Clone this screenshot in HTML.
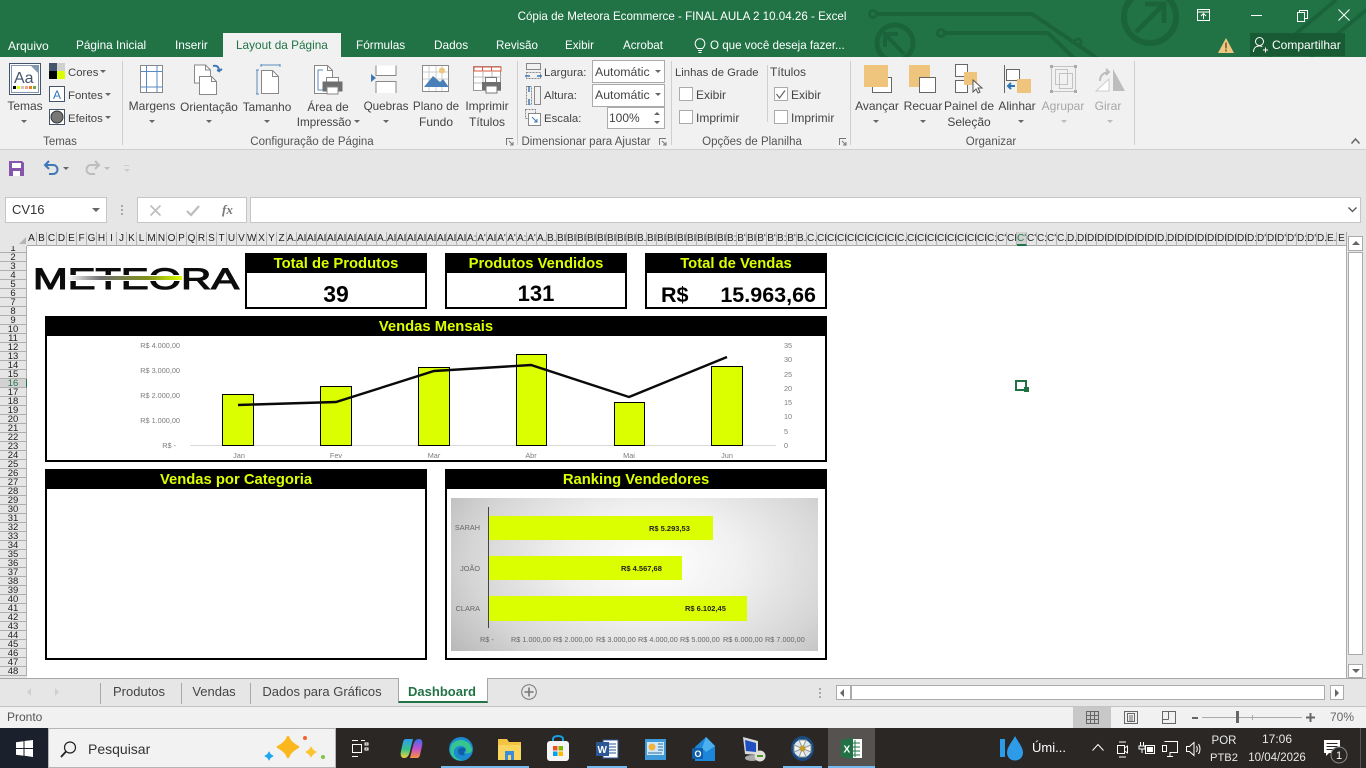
<!DOCTYPE html>
<html lang="pt-BR"><head><meta charset="utf-8"><title>Excel</title>
<style>
html,body{margin:0;padding:0;width:1366px;height:768px;overflow:hidden;background:#e6e6e6;font-family:"Liberation Sans",sans-serif;font-size:12px;color:#444}
.a{position:absolute}
.t{position:absolute;white-space:nowrap;line-height:16px;height:16px}
.c{transform:translateX(-50%)}
.w{color:#fff}
.g{color:#a6a6a6}
.gl{color:#555;font-size:11.5px}
.sm{font-size:11.4px}
svg{position:absolute;overflow:visible}
.sep{position:absolute;width:1px;background:#cfcfcf}
.car{position:absolute;width:0;height:0;border-left:3px solid transparent;border-right:3px solid transparent;border-top:3px solid #666}
.cb{position:absolute;width:12px;height:12px;background:#fff;border:1px solid #ababab}
#cols{position:absolute;left:27px;top:232px;width:1320px;height:14px;display:flex;overflow:hidden}
#cols b{font-weight:normal;flex:0 0 9px;width:9px;border-right:1px solid #b5b5b5;border-bottom:1px solid #a8a8a8;height:13px;line-height:14px;font-size:10px;color:#222;text-align:center;overflow:hidden;white-space:nowrap;background:#e6e6e6}
#cols b.s{background:#d2d2d2;color:#217346;border-bottom:2px solid #217346;height:12px}
#rows{position:absolute;left:0;top:246px;width:27px;height:431px;overflow:hidden;background:#e6e6e6}
#rows b{position:absolute;left:0;width:26px;height:8px;border-bottom:1px solid #aeaeae;border-right:1px solid #aeaeae;font-weight:normal;font-size:9.5px;line-height:9px;text-align:center;color:#222;overflow:hidden}
.box{position:absolute;box-sizing:border-box;border:2px solid #000;background:#fff}
.hd{position:absolute;left:0;right:0;top:0;height:18px;background:#000;color:#dcff00;font-weight:bold;font-size:14.800px;line-height:18px;text-align:center;white-space:nowrap}
.val{position:absolute;color:#000;font-weight:bold;white-space:nowrap;line-height:26px}
.ax{position:absolute;font-size:7.300px;line-height:8px;color:#7c7c7c;white-space:nowrap}
.bar{position:absolute;left:489px;background:#dcff00}
.bl{position:absolute;font-size:7.500px;font-weight:bold;line-height:8px;color:#222;white-space:nowrap}
.sb{position:absolute;box-sizing:border-box;background:#fff;border:1px solid #ababab}
</style></head><body>

<!-- title bar -->
<div class="a" style="left:0;top:0;width:1366px;height:57px;background:#217346;overflow:hidden">
<svg style="left:0;top:0" width="1366" height="57" fill="none" stroke="#1b643b" stroke-width="4">
<circle cx="1150" cy="17" r="26" stroke-width="6"/>
<path d="M1136 32L1163 5M1145 4h19v19" stroke-width="5"/>
<circle cx="895" cy="43" r="18" stroke-width="5"/>
<path d="M887 36L904 54M885 47V34h13" stroke-width="4"/>
<circle cx="873" cy="14" r="3.500" stroke-width="3"/>
<path d="M877 14H1032L1100 60"/>
<circle cx="941" cy="33" r="3.500" stroke-width="3"/>
<path d="M945 33H1048L1076 60"/>
<circle cx="1078" cy="42" r="3" stroke-width="3"/>
<path d="M1268 57L1336 0M1310 57L1366 10" stroke-width="4"/>
</svg>
</div>
<div class="t w" style="left:682px;top:9px;font-size:11.600px;transform:translateX(-50%)">Cópia de Meteora Ecommerce - FINAL AULA 2 10.04.26 - Excel</div>
<svg style="left:1197px;top:9px" width="14" height="13" fill="none" stroke="#fff"><path d="M.5 .5h12v11h-12zM.5 3h12M6.500 10V5M4 7l2.500-2.500L9 7"/></svg>
<div class="a" style="left:1251px;top:15px;width:11px;height:1px;background:#fff"></div>
<svg style="left:1297px;top:10px" width="12" height="12" fill="none" stroke="#fff"><path d="M.5 2.500h7v9h-7zM2.500 2.500V.5h8v8h-3"/></svg>
<svg style="left:1338px;top:9px" width="12" height="12" fill="none" stroke="#fff"><path d="M.5 .5l11 11M11.500 .5l-11 11"/></svg>

<!-- tabs -->
<div class="t w" style="left:8px;top:38px">Arquivo</div>
<div class="t w" style="left:76px;top:37px;font-size:11.800px">Página Inicial</div>
<div class="t w" style="left:175px;top:37px;font-size:11.800px">Inserir</div>
<div class="a" style="left:223px;top:33px;width:118px;height:24px;background:#f1f1f1"></div>
<div class="t" style="left:236px;top:37px;color:#217346;font-size:11.800px">Layout da Página</div>
<div class="t w" style="left:356px;top:37px;font-size:11.800px">Fórmulas</div>
<div class="t w" style="left:434px;top:37px;font-size:11.800px">Dados</div>
<div class="t w" style="left:496px;top:38px;font-size:11.600px">Revisão</div>
<div class="t w" style="left:565px;top:38px;font-size:11.600px">Exibir</div>
<div class="t w" style="left:623px;top:38px;font-size:11.600px">Acrobat</div>
<svg style="left:694px;top:38px" width="12" height="15" fill="none" stroke="#fff"><path d="M3.500 10.500C1 8 .8 5.500 1.600 3.600 3.500-.2 8.500-.2 10.400 3.600c.8 1.900.6 4.400-1.900 6.900zM4 12.500h4M4.500 14.500h3"/></svg>
<div class="t w" style="left:710px;top:38px;font-size:11.600px">O que você deseja fazer...</div>
<svg style="left:1218px;top:38px" width="16" height="15"><path d="M8 0L16 15H0z" fill="#f0c780"/><path d="M8 4.500v6M8 11.500v2" stroke="#7a5a30" stroke-width="1.600"/></svg>
<div class="a" style="left:1250px;top:33px;width:95px;height:23px;background:#185a34"></div>
<svg style="left:1253px;top:37px" width="15" height="16" fill="none" stroke="#fff"><circle cx="6.500" cy="4.500" r="4"/><path d="M.5 15c0-4 2.500-6 6-6 1 0 2 .2 2.800.6M10 13h5M12.500 10.500v5"/></svg>
<div class="t w" style="left:1272px;top:37px">Compartilhar</div>

<!-- ribbon -->
<div class="a" style="left:0;top:57px;width:1366px;height:92px;background:#f1f1f1;border-bottom:1px solid #d0d0d0"></div>
<div class="sep" style="left:122px;top:61px;height:84px"></div>
<div class="sep" style="left:517px;top:61px;height:84px"></div>
<div class="sep" style="left:671px;top:61px;height:84px"></div>
<div class="sep" style="left:850px;top:61px;height:84px"></div>
<div class="sep" style="left:1134px;top:61px;height:84px"></div>
<div class="sep" style="left:767px;top:65px;height:57px"></div>

<!-- temas -->
<svg style="left:9px;top:63px" width="32" height="32"><rect x=".5" y=".5" width="31" height="31" fill="#fff" stroke="#44546a"/><rect x="2.500" y="2.500" width="27" height="27" fill="#fff" stroke="#8497b0"/><path d="M22 3h7v7z" fill="#8497b0"/><rect x="4" y="23" width="3" height="3" fill="#000"/><rect x="8" y="23" width="3" height="3" fill="#dcff00"/><rect x="12" y="23" width="3" height="3" fill="#c9c9c9"/><rect x="16" y="23" width="3" height="3" fill="#f4a582"/><rect x="20" y="23" width="3" height="3" fill="#ed7d31"/><rect x="24" y="23" width="3" height="3" fill="#70ad47"/><text x="5" y="20" font-size="16" fill="#44546a" font-family="Liberation Sans">Aa</text></svg>
<div class="t c" style="left:25px;top:98px">Temas</div><div class="car" style="left:21px;top:120px"></div>
<svg style="left:49px;top:63px" width="16" height="16"><rect width="8" height="8" fill="#44546a"/><rect x="8" width="8" height="8" fill="#d0d0d0"/><rect y="8" width="8" height="8" fill="#000"/><rect x="8" y="8" width="8" height="8" fill="#dcff00"/></svg>
<div class="t sm" style="left:68px;top:65px">Cores</div><div class="car" style="left:100px;top:70px"></div>
<svg style="left:49px;top:86px" width="16" height="16"><rect x=".5" y=".5" width="15" height="15" fill="#fff" stroke="#44546a"/><text x="4" y="13" font-size="12" fill="#2e75b6" font-family="Liberation Sans">A</text></svg>
<div class="t sm" style="left:68px;top:88px">Fontes</div><div class="car" style="left:105px;top:93px"></div>
<svg style="left:49px;top:109px" width="16" height="16"><rect x=".5" y=".5" width="15" height="15" fill="#fff" stroke="#44546a"/><circle cx="8" cy="8" r="6" fill="#777" stroke="#333"/></svg>
<div class="t sm" style="left:68px;top:111px">Efeitos</div><div class="car" style="left:105px;top:116px"></div>
<div class="t c gl" style="left:60px;top:134px">Temas</div>

<!-- config -->
<svg style="left:140px;top:65px" width="24" height="28" fill="#fff" stroke="#888"><rect x=".5" y=".5" width="22" height="27"/><path d="M.5 6.500h22M.5 22h22M6.500 .5v27M17 .5v27" stroke="#5b8ac0" fill="none"/></svg>
<div class="t c" style="left:152px;top:98px">Margens</div><div class="car" style="left:149px;top:120px"></div>
<svg style="left:194px;top:64px" width="30" height="31" fill="#fff" stroke="#888"><path d="M.5 1h11l5 5v13H.5z"/><path d="M5.500 12.500h12l5 5v13H5.500z"/><path d="M11.500 1v5h5M17.500 12.500v5h5" fill="none"/><path d="M19 2c4-1 6 1 6 5l-2-1m2 1l3-2" fill="none" stroke="#3f78b6" stroke-width="2"/></svg>
<div class="t c" style="left:209px;top:99px;font-size:11.800px">Orientação</div><div class="car" style="left:206px;top:120px"></div>
<svg style="left:256px;top:64px" width="24" height="30" fill="#fff" stroke="#888"><path d="M5 1h19M5 0v3M24 0v3M1 6v24M0 6h3M0 30h3" stroke="#5b8ac0" fill="none"/><path d="M5.500 6.500h11l6 6v17h-17z"/><path d="M16.500 6.500v6h6" fill="none"/></svg>
<div class="t c" style="left:267px;top:99px;font-size:11.800px">Tamanho</div><div class="car" style="left:264px;top:120px"></div>
<svg style="left:314px;top:65px" width="30" height="30" fill="#fff" stroke="#888"><path d="M.5 .5h13l5 5v23H.5z"/><path d="M13.500 .5v5h5" fill="none"/><path d="M9 5H4v20h5" fill="none" stroke="#5b8ac0"/><rect x="12.500" y="12.500" width="12" height="5"/><rect x="9" y="17" width="19" height="9" fill="#6f6f6f" stroke="#6f6f6f"/><rect x="13" y="22" width="11" height="7"/></svg>
<div class="t c" style="left:328px;top:99px;font-size:11.800px">Área de</div><div class="t c" style="left:324px;top:115px;font-size:11.700px">Impressão</div><div class="car" style="left:354px;top:120px"></div>
<svg style="left:371px;top:65px" width="26" height="28" fill="#fff" stroke="#888"><path d="M5 .5v10h20V.5M5 28V16.500h20V28"/><path d="M0 9l5 4-5 4z" fill="#3f78b6" stroke="none"/></svg>
<div class="t c" style="left:386px;top:99px;font-size:11.700px">Quebras</div><div class="car" style="left:383px;top:120px"></div>
<svg style="left:422px;top:65px" width="27" height="27"><rect x=".5" y=".5" width="26" height="26" fill="#fff" stroke="#8a8a8a"/><path d="M1 7h25M1 14h25M7 1v25M14 1v25M20 1v25" stroke="#cfcfcf" fill="none"/><circle cx="20" cy="5.500" r="3" fill="#efc57e"/><path d="M2 22l9-11 7 6 3-3 5 7v1H2z" fill="#4a80b8"/></svg>
<div class="t c" style="left:436px;top:99px;font-size:11.700px">Plano de</div><div class="t c" style="left:436px;top:114px">Fundo</div>
<svg style="left:473px;top:66px" width="30" height="28"><rect x=".5" y=".5" width="27" height="24" fill="#fff" stroke="#999"/><path d="M1 1h27v4H1z" fill="#fff" stroke="#d9583a"/><path d="M9.500 1v4M18.500 1v4" stroke="#d9583a"/><path d="M1 11h27M1 17h27M10 5v20M19 5v20" stroke="#bbb"/><rect x="12.500" y="11.500" width="11" height="5" fill="#fff" stroke="#777"/><rect x="9" y="16" width="19" height="8" fill="#6f6f6f"/><rect x="13" y="20" width="11" height="7" fill="#fff" stroke="#777"/></svg>
<div class="t c" style="left:487px;top:98px">Imprimir</div><div class="t c" style="left:487px;top:114px">Títulos</div>
<div class="t c gl" style="left:312px;top:134px">Configuração de Página</div>
<svg style="left:506px;top:138px" width="8" height="8" fill="none" stroke="#777"><path d="M.5 7V.5H7M3 3l4 4M7 4v3H4"/></svg>

<!-- dimensionar -->
<svg style="left:525px;top:63px" width="17" height="18" fill="none" stroke="#888"><rect x="1.500" y=".5" width="14" height="6"/><path d="M1.500 9.500h14v6h-14z" stroke-dasharray="2 1"/><path d="M0 13h5M12 13h5" stroke="#3f78b6" stroke-width="1.500"/></svg>
<div class="t sm" style="left:544px;top:65px">Largura:</div>
<div class="sb" style="left:592px;top:60px;width:73px;height:23px"></div><div class="t" style="left:595px;top:64px;font-size:12.300px">Automátic</div><div class="car" style="left:655px;top:70px"></div>
<svg style="left:525px;top:86px" width="17" height="20" fill="none" stroke="#888"><rect x="9.500" y=".5" width="6" height="18"/><path d="M1.500 .5h5v18h-5z" stroke-dasharray="2 1"/><path d="M4 0v6M4 13v6" stroke="#3f78b6" stroke-width="1.500"/></svg>
<div class="t sm" style="left:544px;top:88px">Altura:</div>
<div class="sb" style="left:592px;top:84px;width:73px;height:23px"></div><div class="t" style="left:595px;top:87px;font-size:12.300px">Automátic</div><div class="car" style="left:655px;top:93px"></div>
<svg style="left:525px;top:109px" width="16" height="17" fill="none" stroke="#888"><path d="M.5 .5h10v9h-10z" stroke-dasharray="2 1"/><path d="M3.500 4.500h12v12h-12z" fill="#fff"/><path d="M7 8l5 5M9 13h3v-3" stroke="#3f78b6"/></svg>
<div class="t sm" style="left:544px;top:111px">Escala:</div>
<div class="sb" style="left:607px;top:107px;width:58px;height:22px"></div><div class="t" style="left:609px;top:110px">100%</div>
<div class="car" style="left:654px;top:112px;border-top:0;border-bottom:3px solid #666"></div><div class="car" style="left:654px;top:121px"></div>
<div class="t c gl" style="left:586px;top:134px">Dimensionar para Ajustar</div>
<svg style="left:659px;top:138px" width="8" height="8" fill="none" stroke="#777"><path d="M.5 7V.5H7M3 3l4 4M7 4v3H4"/></svg>

<!-- opcoes -->
<div class="t" style="left:675px;top:65px;font-size:11.300px">Linhas de Grade</div>
<div class="cb" style="left:679px;top:87px"></div><div class="t" style="left:696px;top:87px">Exibir</div>
<div class="cb" style="left:679px;top:110px"></div><div class="t" style="left:696px;top:110px">Imprimir</div>
<div class="t" style="left:770px;top:64px">Títulos</div>
<div class="cb" style="left:774px;top:87px"></div><svg style="left:776px;top:90px" width="10" height="9" fill="none" stroke="#666" stroke-width="1.200"><path d="M.5 4l3 4L9 .5"/></svg><div class="t" style="left:791px;top:87px">Exibir</div>
<div class="cb" style="left:774px;top:110px"></div><div class="t" style="left:791px;top:110px">Imprimir</div>
<div class="t c gl" style="left:752px;top:134px">Opções de Planilha</div>
<svg style="left:839px;top:138px" width="8" height="8" fill="none" stroke="#777"><path d="M.5 7V.5H7M3 3l4 4M7 4v3H4"/></svg>

<!-- organizar -->
<svg style="left:864px;top:65px" width="30" height="28"><rect x="8.500" y="12.500" width="19" height="15" fill="#fff" stroke="#666"/><rect x="0" y="0" width="24" height="22" fill="#efc57e"/></svg>
<div class="t c" style="left:877px;top:98px">Avançar</div><div class="car" style="left:873px;top:120px"></div>
<svg style="left:909px;top:65px" width="28" height="28"><rect width="21" height="22" fill="#efc57e"/><rect x="10.500" y="12.500" width="16" height="15" fill="#fff" stroke="#666"/></svg>
<div class="t c" style="left:923px;top:98px">Recuar</div><div class="car" style="left:920px;top:120px"></div>
<svg style="left:955px;top:64px" width="30" height="30"><rect x=".5" y=".5" width="12" height="12" fill="#fff" stroke="#666"/><rect x=".5" y="16.500" width="12" height="12" fill="#fff" stroke="#666"/><rect x="9" y="8" width="13" height="13" fill="#efc57e"/><path d="M18 16v12l3-3 2 4 2-1-2-4h4z" fill="#fff" stroke="#555"/></svg>
<div class="t c" style="left:969px;top:98px">Painel de</div><div class="t c" style="left:969px;top:114px">Seleção</div>
<svg style="left:1004px;top:65px" width="28" height="28"><path d="M.5 0v28" stroke="#666"/><rect x="2.500" y="4.500" width="13" height="11" fill="#fff" stroke="#666"/><rect x="13" y="14" width="14" height="14" fill="#efc57e"/><path d="M11 21H4m3-3l-3 3 3 3" fill="none" stroke="#2e75b6" stroke-width="2"/></svg>
<div class="t c" style="left:1017px;top:98px">Alinhar</div><div class="car" style="left:1018px;top:120px"></div>
<svg style="left:1050px;top:65px" width="27" height="28" fill="none" stroke="#c2c2c2"><rect x="5.500" y="4.500" width="12" height="15"/><rect x="9.500" y="8.500" width="13" height="15"/><rect x="1.500" y="1.500" width="24" height="25"/><path d="M0 0h3v3H0zM24 0h3v3h-3zM0 25h3v3H0zM24 25h3v3h-3z" fill="#aaa" stroke="none"/></svg>
<div class="t c g" style="left:1063px;top:98px">Agrupar</div><div class="car" style="left:1061px;top:120px;border-top-color:#bbb"></div>
<svg style="left:1095px;top:67px" width="30" height="26"><path d="M18 2v22h12z" fill="#bdbdbd"/><path d="M14 12L1 24h13z" fill="#fff" stroke="#ccc"/><path d="M5 14c0-5 3-8 8-9m-2-3l3 3-3 3" fill="none" stroke="#bdbdbd" stroke-width="2"/></svg>
<div class="t c g" style="left:1108px;top:98px">Girar</div><div class="car" style="left:1107px;top:120px;border-top-color:#bbb"></div>
<div class="t c gl" style="left:991px;top:134px">Organizar</div>
<svg style="left:1351px;top:138px" width="9" height="6" fill="none" stroke="#666" stroke-width="1.500"><path d="M.5 5.500L4.500 1l4 4.500"/></svg>

<!-- QAT -->
<svg style="left:9px;top:161px" width="15" height="15"><path d="M0 0h13l2 2v13H0z" fill="#8655ad"/><rect x="3" y="2" width="9" height="5" fill="#fff"/><rect x="4" y="10" width="7" height="5" fill="#fff"/></svg>
<svg style="left:44px;top:160px" width="15" height="15" fill="none" stroke="#3f78b6" stroke-width="2"><path d="M5 1L1 5l4 4M1 5h8c6 0 6 9 0 9H5"/></svg>
<div class="car" style="left:63px;top:167px"></div>
<svg style="left:85px;top:160px" width="15" height="15" fill="none" stroke="#bdbdbd" stroke-width="2"><path d="M10 1l4 4-4 4M14 5H6c-6 0-6 9 0 9h4"/></svg>
<div class="car" style="left:104px;top:167px;border-top-color:#bbb"></div>
<div class="a" style="left:124px;top:165px;width:5px;height:1px;background:#ccc"></div><div class="car" style="left:124px;top:169px;border-top-color:#ccc"></div>

<!-- formula bar -->
<div class="sb" style="left:5px;top:197px;width:102px;height:26px;border-color:#c6c6c6"></div>
<div class="t" style="left:12px;top:202px;font-size:13px;color:#333">CV16</div>
<div class="car" style="left:92px;top:208px;border-left-width:4px;border-right-width:4px;border-top-width:4px"></div>
<div class="a" style="left:121px;top:205px;width:2px;height:2px;background:#aaa;box-shadow:0 4px #aaa,0 8px #aaa"></div>
<div class="sb" style="left:137px;top:197px;width:110px;height:26px;border-color:#c6c6c6"></div>
<svg style="left:150px;top:205px" width="12" height="11" fill="none" stroke="#bdbdbd" stroke-width="1.600"><path d="M.5 .5l10 10M10.500 .5l-10 10"/></svg>
<svg style="left:186px;top:205px" width="14" height="11" fill="none" stroke="#bdbdbd" stroke-width="2.200"><path d="M1 6l4 4 8-9"/></svg>
<div class="t" style="left:222px;top:202px;font-family:'Liberation Serif',serif;font-style:italic;font-weight:bold;font-size:13px;color:#777">fx</div>
<div class="sb" style="left:250px;top:197px;width:1111px;height:26px;border-color:#c6c6c6"></div>
<svg style="left:1348px;top:207px" width="9" height="6" fill="none" stroke="#555" stroke-width="1.300"><path d="M.5 .5l4 4 4-4"/></svg>

<!-- sheet -->
<div class="a" style="left:27px;top:246px;width:1319px;height:432px;background:#fff"></div>
<svg style="left:19px;top:237px" width="7" height="7"><path d="M7 0v7H0z" fill="#b5b5b5"/></svg>
<div id="cols"><b>A</b><b>B</b><b>C</b><b>D</b><b>E</b><b>F</b><b>G</b><b>H</b><b>I</b><b>J</b><b>K</b><b>L</b><b>M</b><b>N</b><b>O</b><b>P</b><b>Q</b><b>R</b><b>S</b><b>T</b><b>U</b><b>V</b><b>W</b><b>X</b><b>Y</b><b>Z</b>
<b>A.</b><b>AI</b><b>AI</b><b>AI</b><b>AI</b><b>AI</b><b>AI</b><b>AI</b><b>AI</b><b>A.</b><b>AI</b><b>AI</b><b>AI</b><b>AI</b><b>AI</b><b>AI</b><b>AI</b><b>AI</b><b>A:</b><b>A'</b><b>AI</b><b>A'</b><b>A'</b><b>A:</b><b>A'</b><b>A.</b>
<b>B.</b><b>BI</b><b>BI</b><b>BI</b><b>BI</b><b>BI</b><b>BI</b><b>BI</b><b>BI</b><b>B.</b><b>BI</b><b>BI</b><b>BI</b><b>BI</b><b>BI</b><b>BI</b><b>BI</b><b>BI</b><b>B:</b><b>B'</b><b>BI</b><b>B'</b><b>B'</b><b>B:</b><b>B'</b><b>B.</b>
<b>C.</b><b>CI</b><b>CI</b><b>CI</b><b>CI</b><b>CI</b><b>CI</b><b>CI</b><b>CI</b><b>C.</b><b>CI</b><b>CI</b><b>CI</b><b>CI</b><b>CI</b><b>CI</b><b>CI</b><b>CI</b><b>C:</b><b>C'</b><b>CI</b><b class="s">C'</b><b>C'</b><b>C:</b><b>C'</b><b>C.</b>
<b>D.</b><b>DI</b><b>DI</b><b>DI</b><b>DI</b><b>DI</b><b>DI</b><b>DI</b><b>DI</b><b>D.</b><b>DI</b><b>DI</b><b>DI</b><b>DI</b><b>DI</b><b>DI</b><b>DI</b><b>DI</b><b>D:</b><b>D'</b><b>DI</b><b>D'</b><b>D'</b><b>D:</b><b>D'</b><b>D.</b>
<b>E.</b><b>E</b></div>
<div id="rows">
<b style="top:-2px">1</b><b style="top:7px">2</b><b style="top:16px">3</b><b style="top:25px">4</b><b style="top:34px">5</b><b style="top:43px">6</b><b style="top:52px">7</b><b style="top:61px">8</b><b style="top:70px">9</b><b style="top:79px">10</b><b style="top:88px">11</b><b style="top:97px">12</b><b style="top:106px">13</b><b style="top:115px">14</b><b style="top:124px">15</b><b style="top:133px;background:#d2d2d2;color:#217346;border-right:1px solid #217346">16</b><b style="top:142px">17</b><b style="top:151px">18</b><b style="top:160px">19</b><b style="top:169px">20</b><b style="top:178px">21</b><b style="top:187px">22</b><b style="top:196px">23</b><b style="top:205px">24</b><b style="top:214px">25</b><b style="top:223px">26</b><b style="top:232px">27</b><b style="top:241px">28</b><b style="top:250px">29</b><b style="top:259px">30</b><b style="top:268px">31</b><b style="top:277px">32</b><b style="top:286px">33</b><b style="top:295px">34</b><b style="top:304px">35</b><b style="top:313px">36</b><b style="top:322px">37</b><b style="top:331px">38</b><b style="top:340px">39</b><b style="top:349px">40</b><b style="top:358px">41</b><b style="top:367px">42</b><b style="top:376px">43</b><b style="top:385px">44</b><b style="top:394px">45</b><b style="top:403px">46</b><b style="top:412px">47</b><b style="top:421px">48</b>
</div>
<div class="a" style="left:1015px;top:380px;width:8px;height:7px;border:2px solid #217346"></div>
<div class="a" style="left:1024px;top:387px;width:5px;height:5px;background:#217346"></div>

<!-- logo -->
<svg style="left:33px;top:262px" width="208" height="32">
<text x="0" y="27" font-family="Liberation Sans" font-size="30" textLength="206" lengthAdjust="spacingAndGlyphs" fill="#0c0c0c" stroke="#0c0c0c" stroke-width="1.100">METEORA</text>
<rect x="33" y="13" width="116" height="6" fill="#fff"/>
<defs><linearGradient id="lg"><stop offset="0" stop-color="#fff"/><stop offset=".3" stop-color="#707070"/><stop offset=".7" stop-color="#80901c"/><stop offset="1" stop-color="#dcff00"/></linearGradient></defs>
<rect x="33" y="14" width="116" height="4" fill="url(#lg)"/>
</svg>

<!-- KPIs -->
<div class="box" style="left:245px;top:253px;width:182px;height:56px"><div class="hd">Total de Produtos</div></div>
<div class="val" style="left:245px;top:281px;width:182px;text-align:center;font-size:23px">39</div>
<div class="box" style="left:445px;top:253px;width:182px;height:56px"><div class="hd">Produtos Vendidos</div></div>
<div class="val" style="left:445px;top:281px;width:182px;text-align:center;font-size:22px">131</div>
<div class="box" style="left:645px;top:253px;width:182px;height:56px"><div class="hd">Total de Vendas</div></div>
<div class="val" style="left:661px;top:282px;font-size:21.500px">R$</div>
<div class="val" style="left:700px;top:282px;width:116px;text-align:right;font-size:21.500px">15.963,66</div>

<!-- Vendas mensais -->
<div class="box" style="left:45px;top:316px;width:782px;height:146px"><div class="hd">Vendas Mensais</div></div>
<svg style="left:0;top:0" width="1366" height="768">
<path d="M190 445.500H776" stroke="#d9d9d9" fill="none"/>
<g fill="#dcff00" stroke="#000"><rect x="222.500" y="394.500" width="31" height="51"/><rect x="320.500" y="386.500" width="31" height="59"/><rect x="418.500" y="367.500" width="31" height="78"/><rect x="516.500" y="354.500" width="30" height="91"/><rect x="614.500" y="402.500" width="30" height="43"/><rect x="711.500" y="366.500" width="31" height="79"/></g>
<path d="M238 405L336 402 434 371 531 365 629 397 727 357" fill="none" stroke="#0a0a0a" stroke-width="2.400"/>
</svg>
<div class="ax" style="left:120px;width:60px;text-align:right;top:342px">R$ 4.000,00</div>
<div class="ax" style="left:120px;width:60px;text-align:right;top:367px">R$ 3.000,00</div>
<div class="ax" style="left:120px;width:60px;text-align:right;top:392px">R$ 2.000,00</div>
<div class="ax" style="left:120px;width:60px;text-align:right;top:417px">R$ 1.000,00</div>
<div class="ax" style="left:120px;width:56px;text-align:right;top:442px">R$ -</div>
<div class="ax" style="left:784px;top:342px">35</div><div class="ax" style="left:784px;top:356px">30</div><div class="ax" style="left:784px;top:371px">25</div><div class="ax" style="left:784px;top:385px">20</div><div class="ax" style="left:784px;top:399px">15</div><div class="ax" style="left:784px;top:413px">10</div><div class="ax" style="left:784px;top:428px">5</div><div class="ax" style="left:784px;top:442px">0</div>
<div class="a" style="left:47px;top:451px;width:778px;height:8px;overflow:hidden">
<div class="ax c" style="left:192px;top:1px">Jan</div><div class="ax c" style="left:289px;top:1px">Fev</div><div class="ax c" style="left:387px;top:1px">Mar</div><div class="ax c" style="left:484px;top:1px">Abr</div><div class="ax c" style="left:582px;top:1px">Mai</div><div class="ax c" style="left:680px;top:1px">Jun</div></div>

<!-- categoria -->
<div class="box" style="left:45px;top:469px;width:382px;height:191px"><div class="hd">Vendas por Categoria</div></div>

<!-- ranking -->
<div class="box" style="left:445px;top:469px;width:382px;height:191px"><div class="hd">Ranking Vendedores</div></div>
<div class="a" style="left:451px;top:498px;width:367px;height:153px;background:radial-gradient(ellipse 70% 105% at 55% 42%,#fff 0%,#f0f0f0 35%,#d6d6d6 70%,#b4b4b4 100%)"></div>
<div class="a" style="left:488px;top:507px;width:1px;height:121px;background:#444"></div>
<div class="bar" style="top:516px;width:224px;height:24px"></div>
<div class="bar" style="top:556px;width:193px;height:24px"></div>
<div class="bar" style="top:596px;width:258px;height:25px"></div>
<div class="bl" style="left:649px;top:525px">R$ 5.293,53</div>
<div class="bl" style="left:621px;top:565px">R$ 4.567,68</div>
<div class="bl" style="left:685px;top:605px">R$ 6.102,45</div>
<div class="ax" style="left:440px;width:40px;text-align:right;top:524px;color:#666">SARAH</div>
<div class="ax" style="left:440px;width:40px;text-align:right;top:565px;color:#666">JOÃO</div>
<div class="ax" style="left:440px;width:40px;text-align:right;top:605px;color:#666">CLARA</div>
<div class="ax" style="left:480px;top:636px;color:#666">R$ -</div>
<div class="ax" style="left:511px;top:636px;color:#666">R$ 1.000,00</div>
<div class="ax" style="left:553px;top:636px;color:#666">R$ 2.000,00</div>
<div class="ax" style="left:596px;top:636px;color:#666">R$ 3.000,00</div>
<div class="ax" style="left:638px;top:636px;color:#666">R$ 4.000,00</div>
<div class="ax" style="left:680px;top:636px;color:#666">R$ 5.000,00</div>
<div class="ax" style="left:723px;top:636px;color:#666">R$ 6.000,00</div>
<div class="ax" style="left:765px;top:636px;color:#666">R$ 7.000,00</div>

<!-- v scrollbar -->
<div class="a" style="left:1346px;top:232px;width:1px;height:446px;background:#ababab"></div>
<div class="sb" style="left:1348px;top:236px;width:15px;height:15px"></div>
<div class="car" style="left:1352px;top:241px;border-left-width:4px;border-right-width:4px;border-top:0;border-bottom:4px solid #666"></div>
<div class="sb" style="left:1348px;top:252px;width:15px;height:403px"></div>
<div class="sb" style="left:1348px;top:664px;width:15px;height:14px"></div>
<div class="car" style="left:1352px;top:669px;border-left-width:4px;border-right-width:4px;border-top-width:4px"></div>

<!-- tab strip -->
<div class="a" style="left:0;top:678px;width:1366px;height:1px;background:#a6a6a6"></div>
<div class="a" style="left:0;top:706px;width:1366px;height:1px;background:#c4c4c4"></div>
<svg style="left:27px;top:688px" width="34" height="8" fill="#cfcfcf"><path d="M4 0v8L0 4zM28 0v8l4-4z"/></svg>
<div class="sep" style="left:100px;top:683px;height:21px;background:#a8a8a8"></div>
<div class="sep" style="left:181px;top:683px;height:21px;background:#a8a8a8"></div>
<div class="sep" style="left:250px;top:683px;height:21px;background:#a8a8a8"></div>
<div class="t c" style="left:139px;top:684px;font-size:13px">Produtos</div>
<div class="t c" style="left:214px;top:684px;font-size:13px">Vendas</div>
<div class="t c" style="left:322px;top:684px;font-size:13px">Dados para Gráficos</div>
<div class="a" style="left:398px;top:678px;width:88px;height:23px;background:#fff;border-left:1px solid #a6a6a6;border-right:1px solid #a6a6a6;border-bottom:2px solid #217346"></div>
<div class="t c" style="left:442px;top:684px;font-size:13px;font-weight:bold;color:#217346">Dashboard</div>
<svg style="left:521px;top:684px" width="16" height="16" fill="none" stroke="#777"><circle cx="8" cy="8" r="7.300"/><path d="M8 3.500v9M3.500 8h9" stroke-width="1.600"/></svg>
<div class="a" style="left:819px;top:688px;width:2px;height:2px;background:#aaa;box-shadow:0 4px #aaa,0 8px #aaa"></div>
<div class="sb" style="left:836px;top:685px;width:15px;height:15px"></div>
<div class="a" style="left:840px;top:689px;width:0;height:0;border-top:4px solid transparent;border-bottom:4px solid transparent;border-right:4px solid #666"></div>
<div class="sb" style="left:851px;top:685px;width:474px;height:15px"></div>
<div class="sb" style="left:1330px;top:685px;width:14px;height:15px"></div>
<div class="a" style="left:1335px;top:689px;width:0;height:0;border-top:4px solid transparent;border-bottom:4px solid transparent;border-left:4px solid #666"></div>

<!-- status -->
<div class="a" style="left:0;top:707px;width:1366px;height:21px;background:#f1f1f1"></div>
<div class="t" style="left:7px;top:709px;color:#555">Pronto</div>
<div class="a" style="left:1073px;top:707px;width:38px;height:21px;background:#c8c8c8"></div>
<svg style="left:1086px;top:711px" width="13" height="13" fill="none" stroke="#666"><path d="M.5 .5h12v12H.5zM.5 4.500h12M.5 8.500h12M4.500 .5v12M8.500 .5v12"/></svg>
<svg style="left:1124px;top:711px" width="14" height="13" fill="none" stroke="#666"><path d="M.5 .5h13v12H.5zM3.500 2.500h7v8h-7zM5 5h4M5 7h4M5 9h4"/></svg>
<svg style="left:1162px;top:711px" width="14" height="13" fill="none" stroke="#666"><path d="M.5 .5h13v12H.5zM.5 8.500h6M6.500 .5v8"/></svg>
<div class="a" style="left:1192px;top:717px;width:6px;height:2px;background:#666"></div>
<div class="a" style="left:1202px;top:717px;width:100px;height:1px;background:#aaa"></div>
<div class="a" style="left:1236px;top:711px;width:3px;height:12px;background:#666"></div>
<div class="a" style="left:1252px;top:715px;width:1px;height:5px;background:#aaa"></div>
<svg style="left:1306px;top:713px" width="9" height="9" stroke="#666" stroke-width="2"><path d="M0 4.500h9M4.500 0v9"/></svg>
<div class="t" style="left:1330px;top:709px;color:#666">70%</div>

<!-- taskbar -->
<div class="a" style="left:0;top:728px;width:1366px;height:40px;background:#2a2725"></div>
<div class="a" style="left:0;top:728px;width:48px;height:40px;background:#1a202c"></div>
<svg style="left:16px;top:740px" width="17" height="17" fill="#fff"><path d="M0 2.300L7.500 1.200V8H0zM8.500 1L17 0V8H8.500zM0 9h7.500v6.800L0 14.700zM8.500 9H17v8l-8.500-1.200z"/></svg>
<div class="a" style="left:48px;top:728px;width:288px;height:40px;background:#f2f2f2;box-sizing:border-box;border:1px solid #b5b5b5"></div>
<svg style="left:60px;top:741px" width="17" height="17" fill="none" stroke="#222" stroke-width="1.200"><circle cx="10" cy="6.500" r="5.500"/><path d="M6 10.500L1 16" stroke-width="1.800"/></svg>
<div class="t" style="left:88px;top:741px;font-size:14px;color:#333">Pesquisar</div>
<svg style="left:264px;top:734px" width="62" height="30">
<path d="M24 3Q26 9 34 13 26 17 24 23 22 17 14 13 22 9 24 3z" fill="#fbb81e" stroke="#fbb81e" stroke-width="2.500" stroke-linejoin="round"/>
<path d="M47 13Q48 16 52 18 48 20 47 23 46 20 42 18 46 16 47 13z" fill="#fbc42e" stroke="#fbc42e" stroke-linejoin="round"/>
<circle cx="41" cy="4" r="2" fill="#f2622e"/><circle cx="59" cy="23" r="2" fill="#7ec63f"/>
<path d="M5 18Q6 21 9 22 6 23 5 26 4 23 1 22 4 21 5 18z" fill="#1fa6ee" stroke="#1fa6ee" stroke-linejoin="round"/></svg>
<svg style="left:352px;top:740px" width="16" height="17" fill="none" stroke="#fff"><path d="M0 .5h6M0 16.500h6M9 .5h4M.5 4.500h9v8h-9zM13 3h3v2h-3zM13 8h3v2h-3z"/></svg>
<svg style="left:400px;top:738px" width="23" height="21"><defs><linearGradient id="co1" x1="0" y1="0" x2="0" y2="1"><stop offset="0" stop-color="#2a9df4"/><stop offset=".55" stop-color="#39c28a"/><stop offset="1" stop-color="#f5d33a"/></linearGradient><linearGradient id="co2" x1="0" y1="0" x2="0" y2="1"><stop offset="0" stop-color="#3a6fe8"/><stop offset=".5" stop-color="#c24fd0"/><stop offset="1" stop-color="#f6923c"/></linearGradient></defs><path d="M6 1h7L10 13C9 18 7 20 4 20 1 20 0 17 1 13L3 4C3.500 2 4.500 1 6 1z" fill="url(#co1)"/><path d="M17 20h-7L13 8C14 3 16 1 19 1 22 1 23 4 22 8L20 17C19.500 19 18.500 20 17 20z" fill="url(#co2)"/></svg>
<svg style="left:449px;top:737px" width="24" height="24"><circle cx="12" cy="12" r="12" fill="#1b8ad0"/><path d="M2 9c3-8 18-9 21 3 .5 4-4 5-7 4 3-4-1-8-6-7-4 1-6 4-5 8 1 3 4 6 9 6-8 2-15-5-12-14z" fill="#36c48f"/><path d="M9 14c0-4 7-5 8-1-2 1-3 4-1 5-3 1-7 0-7-4z" fill="#0f5fa8"/></svg>
<svg style="left:498px;top:738px" width="23" height="22"><path d="M0 1h9l2 3h12v18H0z" fill="#f5c344"/><path d="M0 7h23v15H0z" fill="#f9d75e"/><path d="M7 13h9v9h-3v-5h-3v5H7z" fill="#3a8dde"/></svg>
<svg style="left:547px;top:736px" width="22" height="26"><path d="M6 6V3c0-4 10-4 10 0v3" fill="none" stroke="#1a9fe0" stroke-width="2"/><rect y="5" width="22" height="20" rx="3" fill="#f5f5f5"/><rect x="6" y="10" width="4.500" height="4.500" fill="#f25022"/><rect x="11.500" y="10" width="4.500" height="4.500" fill="#7fba00"/><rect x="6" y="15.500" width="4.500" height="4.500" fill="#00a4ef"/><rect x="11.500" y="15.500" width="4.500" height="4.500" fill="#ffb900"/></svg>
<svg style="left:596px;top:739px" width="22" height="20"><rect x="7" y="1" width="15" height="18" fill="#fff" stroke="#2b5797"/><path d="M12 5h8M12 8h8M12 11h8M12 14h8" stroke="#2b5797"/><rect y="3" width="13" height="14" fill="#2b5797"/><text x="1.500" y="14" font-size="10" font-weight="bold" fill="#fff" font-family="Liberation Sans">W</text></svg>
<svg style="left:645px;top:739px" width="21" height="21"><rect width="21" height="21" fill="#3f9ad9"/><rect x="2" y="3" width="17" height="13" fill="#cfe8f8"/><circle cx="7" cy="8" r="3.500" fill="#f5b23c"/><path d="M13 5h5M13 8h5M13 11h5M3 14h14" stroke="#2a6ea8"/></svg>
<svg style="left:692px;top:737px" width="24" height="25"><path d="M3 10L14 0l9 9v15H3z" fill="#1c86d8"/><path d="M14 0l9 9-9 6-4-4z" fill="#4db0ee"/><rect y="11" width="11" height="11" rx="1" fill="#0e5ea8"/><text x="2.500" y="20" font-size="9" font-weight="bold" fill="#fff" font-family="Liberation Sans">O</text></svg>
<svg style="left:742px;top:737px" width="24" height="26"><path d="M1 0l15 4v14L3 17z" fill="#d9d9d9"/><path d="M3 3l11 3v9l-10-1z" fill="#1f4fc0"/><ellipse cx="10" cy="21" rx="7" ry="3" fill="#aaa"/><circle cx="18" cy="19" r="5.500" fill="#e0e0d8"/><path d="M15 19h6" stroke="#4c9a2a" stroke-width="2"/></svg>
<svg style="left:791px;top:736px" width="23" height="25"><ellipse cx="11.500" cy="12.500" rx="11.500" ry="12.500" fill="#1a4a80"/><circle cx="11.500" cy="12.500" r="9" fill="#dfe6ea"/><path d="M11.500 12.500L8 4h7zM11.500 12.500L20 9v7zM11.500 12.500L15 21H8zM11.500 12.500L3 16V9z" fill="#f5f5e8" stroke="#8a9aa8"/><circle cx="11.500" cy="12.500" r="3" fill="#c59a2e"/></svg>
<div class="a" style="left:828px;top:728px;width:47px;height:40px;background:#56524f"></div>
<svg style="left:841px;top:738px" width="22" height="21"><rect x="8" y="1" width="13" height="19" fill="#fff"/><path d="M10 5h9M10 9h9M10 13h9M10 17h9M14 2v17" stroke="#217346"/><path d="M0 2l12-2v21L0 19z" fill="#217346"/><text x="2.500" y="14.500" font-size="10" font-weight="bold" fill="#fff" font-family="Liberation Sans">X</text></svg>
<div class="a" style="left:441px;top:766px;width:39px;height:2px;background:#76b9ed"></div>
<div class="a" style="left:479px;top:766px;width:50px;height:2px;background:#76b9ed"></div>
<div class="a" style="left:587px;top:766px;width:40px;height:2px;background:#76b9ed"></div>
<div class="a" style="left:783px;top:766px;width:39px;height:2px;background:#76b9ed"></div>
<div class="a" style="left:828px;top:766px;width:47px;height:2px;background:#76b9ed"></div>
<svg style="left:1000px;top:736px" width="26" height="25"><rect width="5" height="18" x="0" y="3" fill="#2d9be8"/><path d="M15 0c-3 6-8 11-8 16.500 0 5 3.500 8 8 8s8-3 8-8C23 11 18 6 15 0z" fill="#2d9be8"/></svg>
<div class="t w" style="left:1032px;top:740px;font-size:13px">Úmi...</div>
<svg style="left:1092px;top:744px" width="12" height="7" fill="none" stroke="#fff"><path d="M.5 6.500l5.500-6 5.500 6"/></svg>
<svg style="left:1117px;top:741px" width="11" height="17" fill="none" stroke="#fff"><path d="M2 1h7M2 16h7M.5 4.500h7v8h-7zM7.500 7l3-2v7l-3-2"/></svg>
<svg style="left:1139px;top:742px" width="16" height="14" fill="none" stroke="#fff"><path d="M1.500 0v4M4.500 0v4M0 4h6v3H0zM3 7v4"/><rect x="6.500" y="3.500" width="9" height="8"/><rect x="8" y="5" width="6" height="5" fill="#fff" stroke="none"/></svg>
<svg style="left:1162px;top:741px" width="16" height="16" fill="none" stroke="#fff"><path d="M2.500 .5h13v11h-8M.5 4.500h4v6h-4zM8 11.500v4M5 15.500h6"/></svg>
<svg style="left:1186px;top:741px" width="15" height="16" fill="none" stroke="#fff"><path d="M.5 5.500h3L8 1.500v13l-4.500-4h-3zM10.500 5c1 2 1 4 0 6M12.500 3c2 3 2 7 0 10"/></svg>
<div class="t c" style="left:1224px;top:733px;color:#e8e8e8;font-size:11.500px">POR</div>
<div class="t c" style="left:1224px;top:750px;color:#e8e8e8;font-size:11.200px">PTB2</div>
<div class="t c" style="left:1277px;top:731px;color:#e8e8e8">17:06</div>
<div class="t c" style="left:1277px;top:750px;color:#e8e8e8;font-size:11.500px">10/04/2026</div>
<svg style="left:1324px;top:740px" width="24" height="24"><path d="M0 0h16v13H5l-3 3v-3H0z" fill="#fff"/><path d="M2.500 3.500h11M2.500 6.500h11M2.500 9.500h11" stroke="#2a2725"/><circle cx="15" cy="15" r="8" fill="#2a2725" stroke="#8a8a8a"/><text x="12" y="19" font-size="11" fill="#fff" font-family="Liberation Sans">1</text></svg>
<div class="a" style="left:1360px;top:728px;width:1px;height:40px;background:#555"></div>
</body></html>
